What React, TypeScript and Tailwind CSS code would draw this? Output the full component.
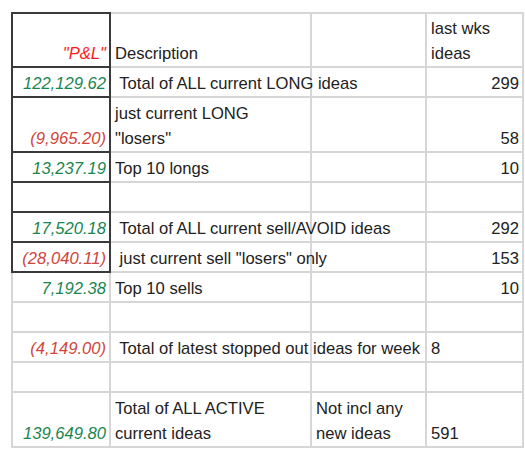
type Cell = {
  text?: string[];
  kind?: 'pos' | 'neg' | 'head' | 'text';
  align?: 'left' | 'right';
  nowrap?: boolean;
  tight?: boolean;
};

type Row = { h: number; dark?: boolean; cells: Cell[] };

const rows: Row[] = [
  {
    h: 54,
    dark: true,
    cells: [
      { text: ['"P&L"'], kind: 'head', align: 'right' },
      { text: ['Description'] },
      {},
      { text: ['last wks', 'ideas'] },
    ],
  },
  {
    h: 30,
    dark: true,
    cells: [
      { text: ['122,129.62'], kind: 'pos', align: 'right' },
      { text: [' Total of ALL current LONG ideas'], nowrap: true },
      {},
      { text: ['299'], align: 'right' },
    ],
  },
  {
    h: 55,
    dark: true,
    cells: [
      { text: ['(9,965.20)'], kind: 'neg', align: 'right' },
      { text: ['just current LONG', '"losers"'] },
      {},
      { text: ['58'], align: 'right' },
    ],
  },
  {
    h: 30,
    dark: true,
    cells: [
      { text: ['13,237.19'], kind: 'pos', align: 'right' },
      { text: ['Top 10 longs'] },
      {},
      { text: ['10'], align: 'right' },
    ],
  },
  { h: 30, dark: true, cells: [{}, {}, {}, {}] },
  {
    h: 30,
    dark: true,
    cells: [
      { text: ['17,520.18'], kind: 'pos', align: 'right' },
      { text: [' Total of ALL current sell/AVOID ideas'], nowrap: true },
      {},
      { text: ['292'], align: 'right' },
    ],
  },
  {
    h: 30,
    dark: true,
    cells: [
      { text: ['(28,040.11)'], kind: 'neg', align: 'right' },
      { text: [' just current sell "losers" only'], nowrap: true },
      {},
      { text: ['153'], align: 'right' },
    ],
  },
  {
    h: 30,
    cells: [
      { text: ['7,192.38'], kind: 'pos', align: 'right' },
      { text: ['Top 10 sells'] },
      {},
      { text: ['10'], align: 'right' },
    ],
  },
  { h: 30, cells: [{}, {}, {}, {}] },
  {
    h: 30,
    cells: [
      { text: ['(4,149.00)'], kind: 'neg', align: 'right' },
      { text: [' Total of latest stopped out'], nowrap: true },
      { text: ['ideas for week'], nowrap: true, tight: true },
      { text: ['8'] },
    ],
  },
  { h: 30, cells: [{}, {}, {}, {}] },
  {
    h: 55,
    cells: [
      { text: ['139,649.80'], kind: 'pos', align: 'right' },
      { text: ['Total of ALL ACTIVE', 'current ideas'] },
      { text: ['Not incl any', 'new ideas'] },
      { text: ['591'] },
    ],
  },
];

const KIND_CLASS = {
  pos: 'italic text-[#1a8550]',
  neg: 'italic text-[#d0453c]',
  head: 'italic text-[#ff1a1a]',
  text: 'text-[#222]',
} as const;

function TableCell({ cell, first, dark }: { cell: Cell; first: boolean; dark?: boolean }) {
  const border = first && dark ? 'border-2 border-[#3a3a3a]' : 'border-2 border-[#d6d6d6]';
  const pad = cell.tight ? 'pl-px pr-0' : cell.align === 'right' ? 'pl-[4px] pr-[3px]' : 'pl-[4px] pr-[3px]';
  return (
    <td
      className={`${border} ${pad} pb-0 align-bottom ${cell.align === 'right' ? 'text-right' : 'text-left'} ${
        KIND_CLASS[cell.kind ?? 'text']
      } ${cell.nowrap ? 'overflow-visible whitespace-pre' : 'whitespace-pre-wrap'}`}
    >
      {cell.text?.map((line, i) => (
        <div key={i}>{line}</div>
      ))}
    </td>
  );
}

export default function App() {
  return (
    <div className="h-[461px] w-[525px] bg-white pt-[12px] pl-[11px] font-['Liberation_Sans',Arial,sans-serif] text-[16.6px] leading-[25px]">
      <table className="w-[511px] table-fixed border-collapse">
        <colgroup>
          <col className="w-[98px]" />
          <col className="w-[201px]" />
          <col className="w-[115px]" />
          <col className="w-[97px]" />
        </colgroup>
        <tbody>
          {rows.map((row, r) => (
            <tr key={r} style={{ height: row.h }}>
              {row.cells.map((cell, c) => (
                <TableCell key={c} cell={cell} first={c === 0} dark={row.dark} />
              ))}
            </tr>
          ))}
        </tbody>
      </table>
    </div>
  );
}
